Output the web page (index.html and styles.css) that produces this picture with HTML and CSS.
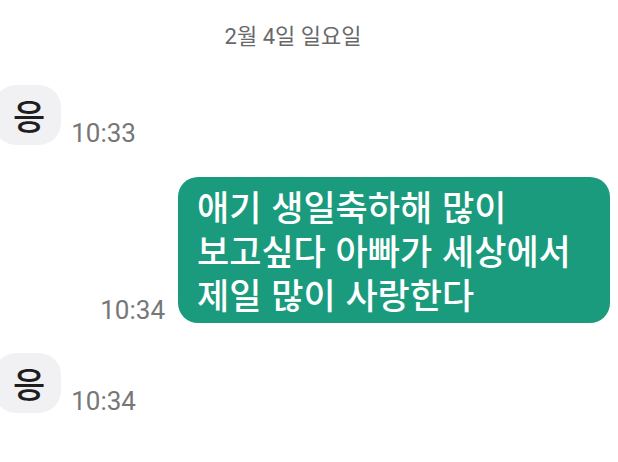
FILE: index.html
```html
<!DOCTYPE html>
<html lang="ko">
<head>
  <meta charset="UTF-8">
  <title>대화</title>
  <link rel="stylesheet" href="styles.css">
</head>
<body>
  <div class="chat">
    <div class="date">2월 4일 일요일</div>

    <div class="msg in">
      <div class="bubble">응</div>
      <div class="time">10:33</div>
    </div>

    <div class="msg out">
      <div class="time">10:34</div>
      <div class="bubble">애기 생일축하해 많이 보고싶다 아빠가 세상에서 제일 많이 사랑한다</div>
    </div>

    <div class="msg in">
      <div class="bubble">응</div>
      <div class="time">10:34</div>
    </div>
  </div>
</body>
</html>
```

FILE: styles.css
```css
body {
  margin: 0;
  background: #ffffff;
  font-family: Roboto, "Noto Sans CJK KR", sans-serif;
  overflow: hidden;
}
.chat {
  padding: 23px 8px 0 0;
}
.date {
  display: flex;
  justify-content: center;
  padding-right: 24px;
  font-size: 22px;
  line-height: 28px;
  color: #686868;
  margin-bottom: 34px;
}
.msg {
  display: flex;
  align-items: flex-end;
}
.msg.in {
  margin-left: -6px;
  gap: 10px;
}
.msg.out {
  justify-content: flex-end;
  gap: 13px;
  margin: 32px 0 30px;
}
.bubble {
  font-family: "Noto Sans CJK KR", sans-serif;
  font-weight: 500;
  word-break: keep-all;
}
.in .bubble {
  background: #f1f1f3;
  color: #1e1e1e;
  font-size: 35px;
  line-height: 40px;
  padding: 10px 16px 10px 19px;
  border-radius: 22px;
}
.out .bubble {
  box-sizing: border-box;
  width: 432px;
  background: #1b9b7d;
  color: #ffffff;
  font-size: 35px;
  line-height: 44px;
  padding: 7px 18px 7px 19px;
  border-radius: 20px;
}
.time {
  font-size: 26px;
  line-height: 24px;
  color: #777777;
}
.out .time {
  margin-bottom: 1px;
}
```
